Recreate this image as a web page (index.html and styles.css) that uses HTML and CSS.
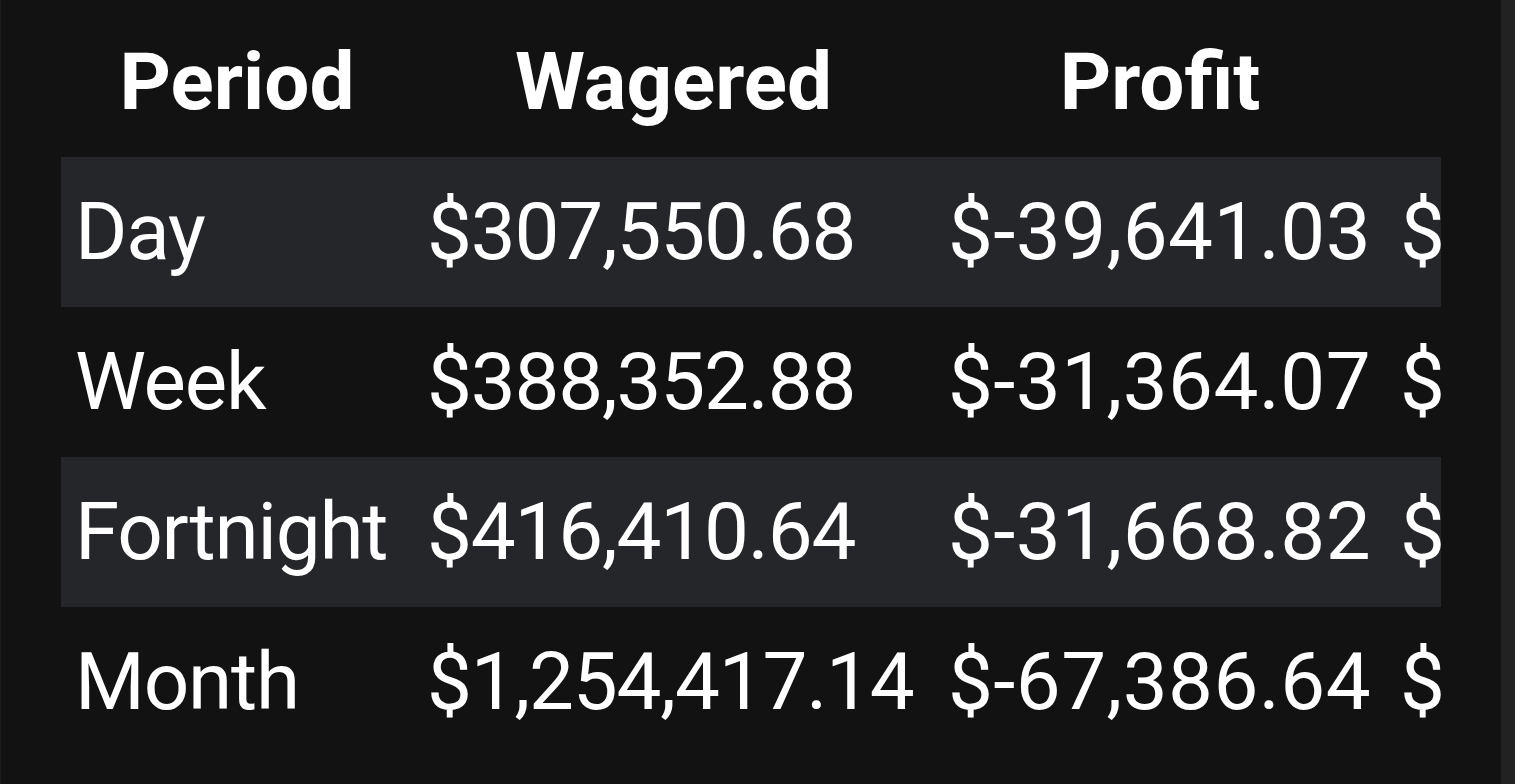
FILE: index.html
```html
<!DOCTYPE html>
<html lang="en">
<head>
<meta charset="utf-8">
<title>Stats</title>
<link rel="stylesheet" href="styles.css">
</head>
<body>
<div class="page">
  <main class="content">
    <div class="table-wrap">
      <table class="stats">
        <colgroup>
          <col class="c-period">
          <col class="c-wagered">
          <col class="c-profit">
          <col class="c-extra">
        </colgroup>
        <thead>
          <tr>
            <th>Period</th>
            <th>Wagered</th>
            <th>Profit</th>
            <th></th>
          </tr>
        </thead>
        <tbody>
          <tr><td>Day</td><td>$307,550.68</td><td class="profit">$-39,641.03</td><td>$</td></tr>
          <tr><td>Week</td><td>$388,352.88</td><td class="profit">$-31,364.07</td><td>$</td></tr>
          <tr><td>Fortnight</td><td>$416,410.64</td><td class="profit">$-31,668.82</td><td>$</td></tr>
          <tr><td>Month</td><td>$1,254,417.14</td><td class="profit">$-67,386.64</td><td>$</td></tr>
        </tbody>
      </table>
    </div>
  </main>
  <div class="scrollbar"></div>
</div>
</body>
</html>
```
FILE: styles.css
```css
html, body {
  margin: 0;
  padding: 0;
  background: #121212;
  height: 100%;
}

.page {
  display: flex;
  height: 784px;
  overflow: hidden;
}

.content {
  flex: 1;
  border-left: 1px solid #1b1b1b;
  padding: 7px 0 0 60px;
  min-width: 0;
}

.scrollbar {
  width: 14px;
  background: #222222;
}

.table-wrap {
  width: 1380px;
  overflow: hidden;
}

.stats {
  border-collapse: collapse;
  table-layout: fixed;
  width: 1900px;
  font-family: Roboto, "Noto Sans", sans-serif;
  color: #ffffff;
  font-size: 80px;
  white-space: nowrap;
}

.c-period { width: 352px; }
.c-wagered { width: 521px; }
.c-profit { width: 452px; }
.c-extra { width: 575px; }

.stats th {
  height: 150px;
  padding: 0;
  font-weight: 700;
  text-align: center;
  vertical-align: middle;
}

.stats td {
  height: 150px;
  padding: 0 0 0 14px;
  font-weight: 400;
  text-align: left;
  vertical-align: middle;
  letter-spacing: -1.2px;
}

.stats td.profit {
  letter-spacing: 0.4px;
}

.stats tbody tr:nth-child(odd) {
  background: #25262a;
}
```
